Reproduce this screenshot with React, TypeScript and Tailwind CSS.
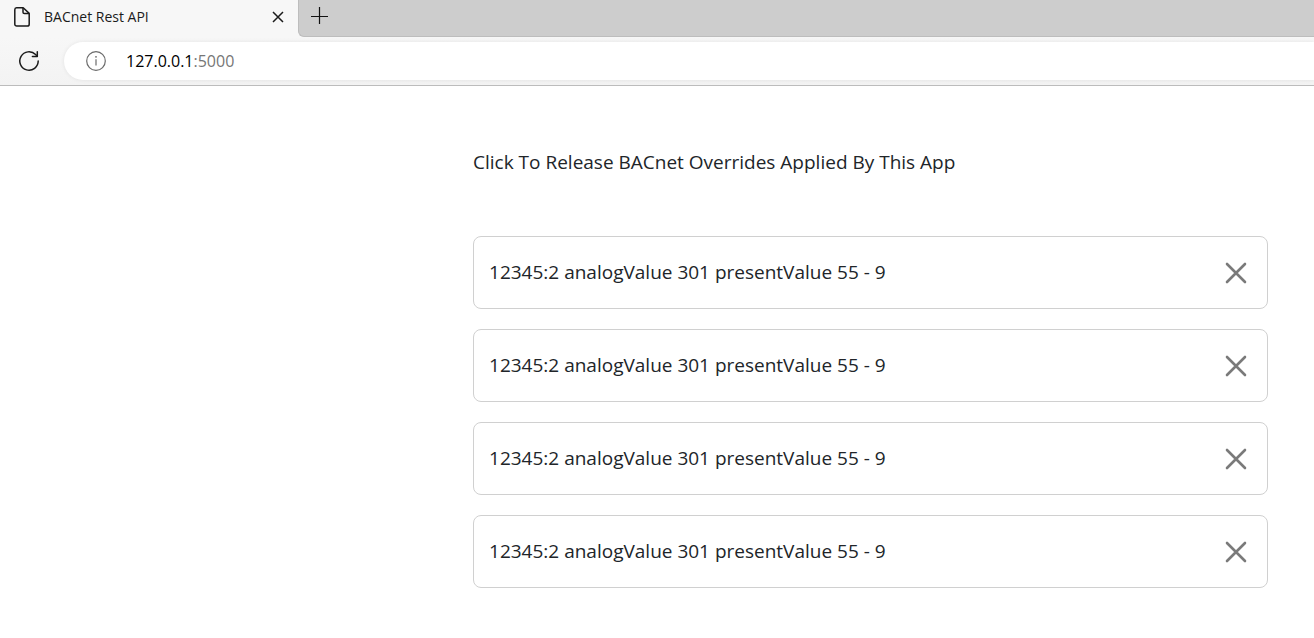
const overrides = [
  { id: 1, label: "12345:2 analogValue 301 presentValue 55 - 9" },
  { id: 2, label: "12345:2 analogValue 301 presentValue 55 - 9" },
  { id: 3, label: "12345:2 analogValue 301 presentValue 55 - 9" },
  { id: 4, label: "12345:2 analogValue 301 presentValue 55 - 9" },
];

function PageIcon() {
  return (
    <svg className="h-5 w-4 shrink-0" viewBox="0 0 16 20" fill="none" stroke="#1b1b1b" strokeWidth="1.5" strokeLinejoin="round" aria-hidden="true">
      <path d="M2.6 0.8H9.2L15.2 6.4V17.2a1.9 1.9 0 0 1-1.9 1.9H2.7A1.9 1.9 0 0 1 0.8 17.2V2.7A1.9 1.9 0 0 1 2.6 0.8Z" />
      <path d="M9 1V5.2a1.4 1.4 0 0 0 1.4 1.4H15" />
    </svg>
  );
}

function ReloadIcon() {
  return (
    <svg className="size-5" viewBox="0 0 20 20" fill="none" stroke="#1b1b1b" strokeWidth="1.5" strokeLinecap="round" strokeLinejoin="round" aria-hidden="true">
      <path d="M19.2 10A9.2 9.2 0 1 1 16.6 3.6L18.2 5.2" />
      <path d="M18.3 0.8V5.4H13.4" />
    </svg>
  );
}

function InfoIcon() {
  return (
    <svg className="size-5" viewBox="0 0 20 20" fill="none" stroke="#6b6b6b" strokeWidth="1.2" aria-hidden="true">
      <circle cx="10" cy="10" r="9.3" />
      <path d="M10 8.2V14.6" />
      <circle cx="10" cy="5.8" r="0.9" fill="#6b6b6b" stroke="none" />
    </svg>
  );
}

function TabStrip() {
  return (
    <div className="flex h-[37px] bg-[#f7f7f7]">
      <div className="flex w-[298px] shrink-0 items-center pb-1 pl-3.5 pr-3">
        <PageIcon />
        <span className="ml-3.5 grow text-[14px] leading-5">BACnet Rest API</span>
        <button type="button" aria-label="Close tab" className="flex size-4 items-center justify-center">
          <svg className="size-3" viewBox="0 0 12 12" stroke="#1b1b1b" strokeWidth="1.5" aria-hidden="true">
            <path d="M1 1L11 11M11 1L1 11" />
          </svg>
        </button>
      </div>
      <div className="flex grow items-center rounded-bl-md border-b border-l border-[#bdbdbd] bg-[#cdcdcd] pb-1 pl-3">
        <button type="button" aria-label="New tab" className="flex size-[18px] items-center justify-center">
          <svg className="size-[18px]" viewBox="0 0 18 18" stroke="#111111" strokeWidth="1.2" aria-hidden="true">
            <path d="M8.5 0V17M0 9.5H17" />
          </svg>
        </button>
      </div>
    </div>
  );
}

function AddressBar() {
  return (
    <div className="flex h-[49px] items-center border-b border-[#bcbcbc] bg-linear-to-b from-[#f7f7f7] to-[#f3f3f3] pl-[19px]">
      <button type="button" aria-label="Reload" className="size-5 shrink-0">
        <ReloadIcon />
      </button>
      <div className="ml-[25px] flex h-[38px] grow items-center rounded-l-full bg-white pl-[22px] shadow-[0_0_4px_rgba(0,0,0,0.08)]">
        <button type="button" aria-label="Site information" className="size-5">
          <InfoIcon />
        </button>
        <a href="#" className="ml-5 text-[16px] leading-6 text-black">
          127.0.0.1<span className="text-[#767676]">:5000</span>
        </a>
      </div>
    </div>
  );
}

export default function App() {
  return (
    <div className="min-h-screen bg-white font-['Open_Sans','Noto_Sans',sans-serif] text-[#1b1b1b]">
      <header>
        <TabStrip />
        <AddressBar />
      </header>
      <main className="ml-[36%] mr-[46px] pt-15 text-[#212529]">
        <h1 className="text-[19px] leading-8">Click To Release BACnet Overrides Applied By This App</h1>
        <ul className="mt-[58px] flex flex-col gap-5">
          {overrides.map((item) => (
            <li key={item.id} className="flex items-center justify-between rounded-lg border border-[#d0d0d0] py-5 pl-[15px] pr-5">
              <span className="text-[19px] leading-[31px]">{item.label}</span>
              <button type="button" aria-label="Release override" className="size-[22px]">
                <svg className="size-[22px]" viewBox="0 0 22 22" stroke="#7a7a7a" strokeWidth="2.6" strokeLinecap="round" aria-hidden="true">
                  <path d="M2 2L20 20M20 2L2 20" />
                </svg>
              </button>
            </li>
          ))}
        </ul>
      </main>
    </div>
  );
}
